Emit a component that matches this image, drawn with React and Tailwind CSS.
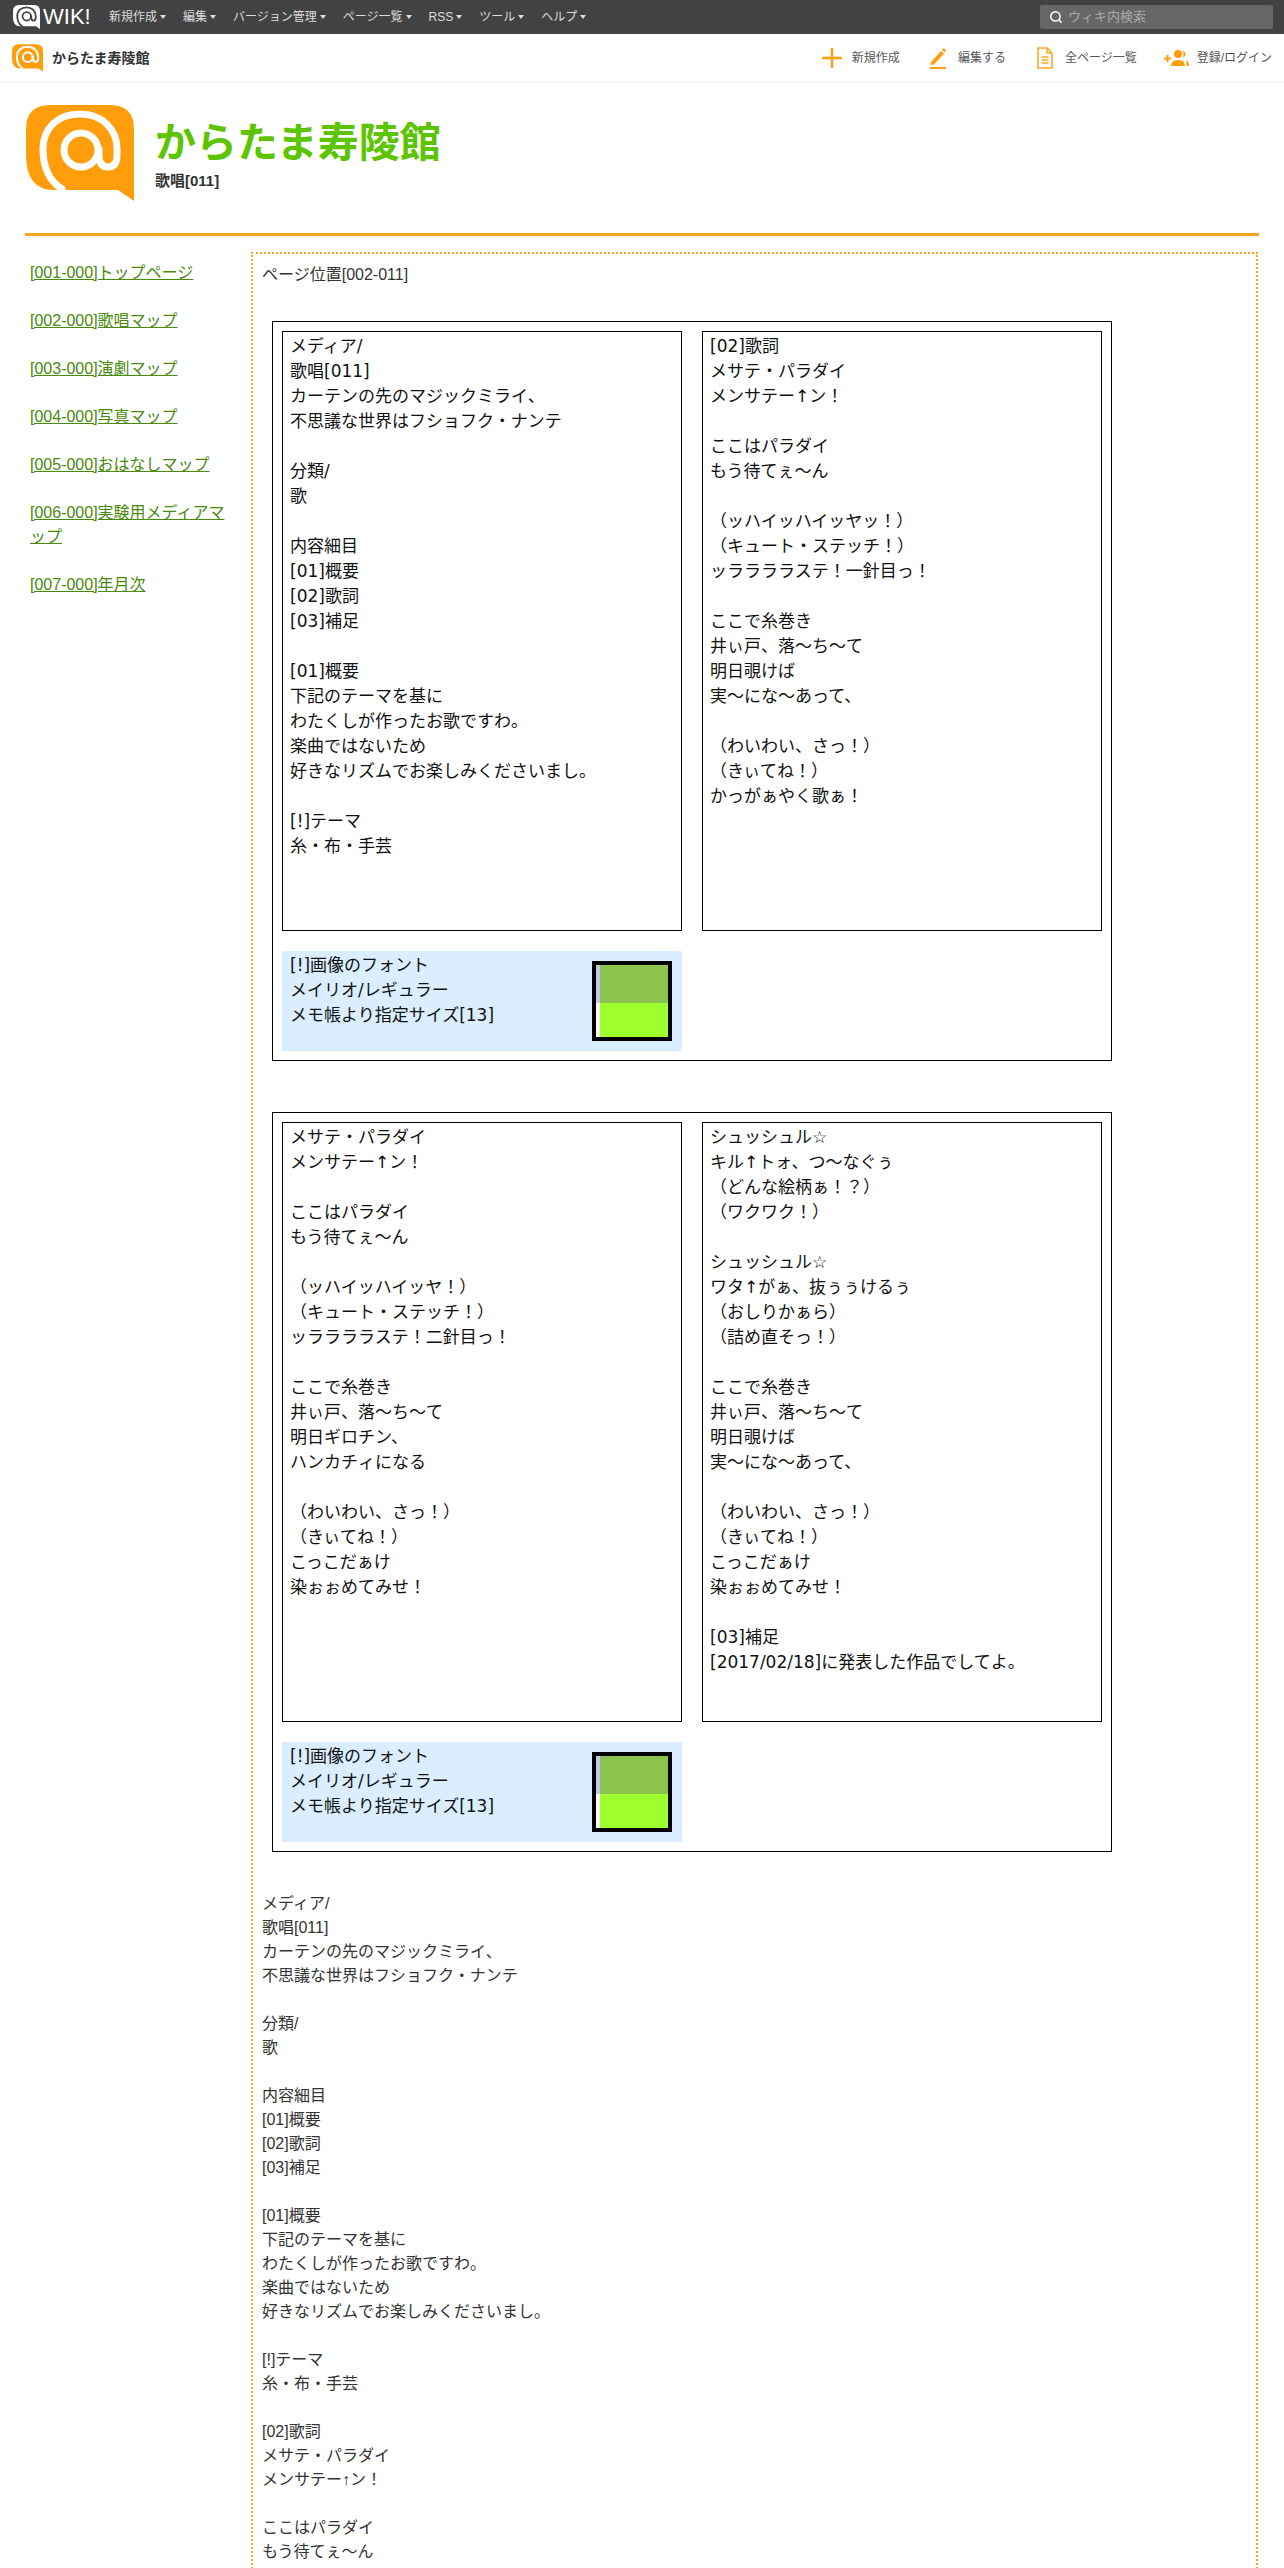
import { Search } from 'lucide-react'

const menu = ['新規作成', '編集', 'バージョン管理', 'ページ一覧', 'RSS', 'ツール', 'ヘルプ']

const links = [
  '[001-000]トップページ',
  '[002-000]歌唱マップ',
  '[003-000]演劇マップ',
  '[004-000]写真マップ',
  '[005-000]おはなしマップ',
  '[006-000]実験用メディアマップ',
  '[007-000]年月次',
]

const box1 = `メディア/
歌唱[011]
カーテンの先のマジックミライ、
不思議な世界はフショフク・ナンテ

分類/
歌

内容細目
[01]概要
[02]歌詞
[03]補足

[01]概要
下記のテーマを基に
わたくしが作ったお歌ですわ。
楽曲ではないため
好きなリズムでお楽しみくださいまし。

[!]テーマ
糸・布・手芸`

const box2 = `[02]歌詞
メサテ・パラダイ
メンサテー↑ン！

ここはパラダイ
もう待てぇ～ん

（ッハイッハイッヤッ！）
（キュート・ステッチ！）
ッララララステ！一針目っ！

ここで糸巻き
井ぃ戸、落～ち～て
明日覗けば
実～にな～あって、

（わいわい、さっ！）
（きぃてね！）
かっがぁやく歌ぁ！`

const box3 = `メサテ・パラダイ
メンサテー↑ン！

ここはパラダイ
もう待てぇ～ん

（ッハイッハイッヤ！）
（キュート・ステッチ！）
ッララララステ！二針目っ！

ここで糸巻き
井ぃ戸、落～ち～て
明日ギロチン、
ハンカチィになる

（わいわい、さっ！）
（きぃてね！）
こっこだぁけ
染ぉぉめてみせ！`

const box4 = `シュッシュル☆
キル↑トォ、つ～なぐぅ
（どんな絵柄ぁ！？）
（ワクワク！）

シュッシュル☆
ワタ↑がぁ、抜ぅぅけるぅ
（おしりかぁら）
（詰め直そっ！）

ここで糸巻き
井ぃ戸、落～ち～て
明日覗けば
実～にな～あって、

（わいわい、さっ！）
（きぃてね！）
こっこだぁけ
染ぉぉめてみせ！

[03]補足
[2017/02/18]に発表した作品でしてよ。`

const plain = `メディア/
歌唱[011]
カーテンの先のマジックミライ、
不思議な世界はフショフク・ナンテ

分類/
歌

内容細目
[01]概要
[02]歌詞
[03]補足

[01]概要
下記のテーマを基に
わたくしが作ったお歌ですわ。
楽曲ではないため
好きなリズムでお楽しみくださいまし。

[!]テーマ
糸・布・手芸

[02]歌詞
メサテ・パラダイ
メンサテー↑ン！

ここはパラダイ
もう待てぇ～ん`

function AtLogo({ className, bg, fg }) {
  return (
    <svg viewBox="0 0 108 96" className={className}>
      <path d="M24 0H84Q108 0 108 24V96L92 85H28Q0 85 0 50V24Q0 0 24 0Z" fill={bg} />
      <g fill="none" stroke={fg} strokeWidth="7" strokeLinecap="round">
        <path d="M36 84C22 75 17 60 17 44C17 22 33 9 54 9C76 9 91 24 91 44V50Q91 62 82 62Q73 62 73 50V44" />
        <circle cx="55" cy="45" r="17" />
      </g>
    </svg>
  )
}

function MediaBox({ text }) {
  return (
    <div className="h-[600px] w-[400px] border border-black pl-[7px] pt-[2px] font-['DejaVu_Sans','Noto_Sans_CJK_JP',sans-serif] text-[17px] leading-[25px] whitespace-pre-line text-[#111]">
      {text}
    </div>
  )
}

function FontNote() {
  return (
    <div className="flex h-[100px] w-[400px] justify-between bg-[#daeeff] pl-2 pr-[10px] pt-[2px] font-['DejaVu_Sans','Noto_Sans_CJK_JP',sans-serif] text-[17px] leading-[25px] text-[#111]">
      <div>
        [!]画像のフォント
        <br />
        メイリオ/レギュラー
        <br />
        メモ帳より指定サイズ[13]
      </div>
      <div className="mt-2 flex h-20 w-20 border-4 border-black">
        <div className="flex w-1 flex-col">
          <div className="h-[38px] bg-[#c4c4ee]" />
          <div className="flex-1 bg-white" />
        </div>
        <div className="flex flex-1 flex-col">
          <div className="h-[38px] bg-[#8bc34f]" />
          <div className="flex-1 bg-[#9dff2e]" />
        </div>
      </div>
    </div>
  )
}

function MediaTable({ left, right }) {
  return (
    <div className="grid w-[840px] grid-cols-[400px_400px] gap-x-5 gap-y-5 border border-black p-[9px]">
      <MediaBox text={left} />
      <MediaBox text={right} />
      <FontNote />
    </div>
  )
}

export default function App() {
  return (
    <div className="relative h-[2568px] overflow-hidden bg-white font-['Liberation_Sans','Noto_Sans_CJK_JP',sans-serif] text-[#333]">
      {/* top bar */}
      <div className="flex h-[34px] items-center bg-[#424242] pl-[13px] pr-[11px]">
        <AtLogo className="h-[24px] w-[27px]" bg="#fff" fg="#424242" />
        <span className="ml-[3px] w-[66px] text-[22px] leading-none font-light text-white">WIK!</span>
        <div className="flex gap-[17px] text-[12px] text-[#ddd]">
          {menu.map((m) => (
            <span key={m} className="flex items-center gap-[3px]">
              {m}
              <span className="h-0 w-0 border-x-[3px] border-t-[4px] border-x-transparent border-t-[#ddd]" />
            </span>
          ))}
        </div>
        <div className="ml-auto flex h-6 w-[233px] items-center gap-[5px] rounded-[2px] bg-[#666] pl-[9px] text-[13px] text-[#aaa]">
          <Search size={14} strokeWidth={2.5} className="text-white" />
          ウィキ内検索
        </div>
      </div>

      {/* site bar */}
      <div className="flex h-[49px] items-center border-b border-[#eee] pl-3 pr-3">
        <AtLogo className="h-[28px] w-[31px]" bg="#ff9d0a" fg="#fff" />
        <span className="ml-[9px] text-[14px] font-bold">からたま寿陵館</span>
        <div className="ml-auto flex items-center text-[12px] text-[#555]">
          <span className="flex items-center gap-[10px]">
            <svg viewBox="0 0 20 20" className="h-5 w-5" stroke="#ff9d0a" strokeWidth="2.4">
              <path d="M10 0V20M0 10H20" />
            </svg>
            新規作成
          </span>
          <span className="ml-[30px] flex items-center gap-[12px]">
            <svg viewBox="0 0 16 22" className="h-[22px] w-4" fill="#ff9d0a">
              <path d="M1 15L11 4L14 6.5L4 17.5L0.5 18Z M12 3L13.5 1L16 3.5L14.5 5.5Z M0 20H16V22H0Z" />
            </svg>
            編集する
          </span>
          <span className="ml-[31px] flex items-center gap-[12px]">
            <svg viewBox="0 0 16 22" className="h-[22px] w-4" fill="none" stroke="#ffa726" strokeWidth="1.6">
              <path d="M1 1H10L15 6V21H1Z M10 1V6H15 M4.5 10H11.5 M4.5 13H11.5 M4.5 16H11.5" />
            </svg>
            全ページ一覧
          </span>
          <span className="ml-[27px] flex items-center gap-2">
            <svg viewBox="0 0 25 18" className="h-[18px] w-[25px]" fill="#ff9d0a">
              <path d="M0 8.5H7V10.5H0Z M2.5 6H4.5V13H2.5Z" />
              <circle cx="14" cy="5" r="4" />
              <path d="M7 17Q7 11 14 11Q21 11 21 17Z" />
              <path d="M19 1.5Q21.5 2.5 21.5 5Q21.5 7.5 19 8.5Q19.8 5 19 1.5Z M22 11Q25 12.5 25 17H22.5Q22.8 13.5 22 11Z" />
            </svg>
            登録/ログイン
          </span>
        </div>
      </div>

      {/* hero */}
      <div className="flex h-[150px] pl-[26px] pt-[22px]">
        <AtLogo className="h-[96px] w-[108px]" bg="#ff9d0a" fg="#fff" />
        <div className="ml-[21px] pt-[13px]">
          <div className="text-[41px] leading-[50px] font-bold text-[#5cc400]">からたま寿陵館</div>
          <div className="mt-[2px] text-[15px] leading-[22px] font-bold">歌唱[011]</div>
        </div>
      </div>
      <div className="ml-[25px] h-[3px] w-[1234px] bg-[#f8a71c]" />

      {/* body */}
      <div className="mt-4 flex items-stretch">
        <div className="w-[251px] pl-[30px] pt-[9px]">
          <div className="flex w-[200px] flex-col gap-6 text-[16px] leading-6">
            {links.map((l) => (
              <a key={l} href="#" className="text-[#4a8a0c] underline">
                {l}
              </a>
            ))}
          </div>
        </div>
        <div className="h-[2400px] w-[1007px] border-2 border-dotted border-[#f8a71c] px-[9px] pt-[9px] text-[16px] leading-6">
          <div>ページ位置[002-011]</div>
          <div className="mt-[34px] ml-[10px]">
            <MediaTable left={box1} right={box2} />
          </div>
          <div className="mt-[51px] ml-[10px]">
            <MediaTable left={box3} right={box4} />
          </div>
          <div className="mt-10 whitespace-pre-line">{plain}</div>
        </div>
      </div>
    </div>
  )
}
